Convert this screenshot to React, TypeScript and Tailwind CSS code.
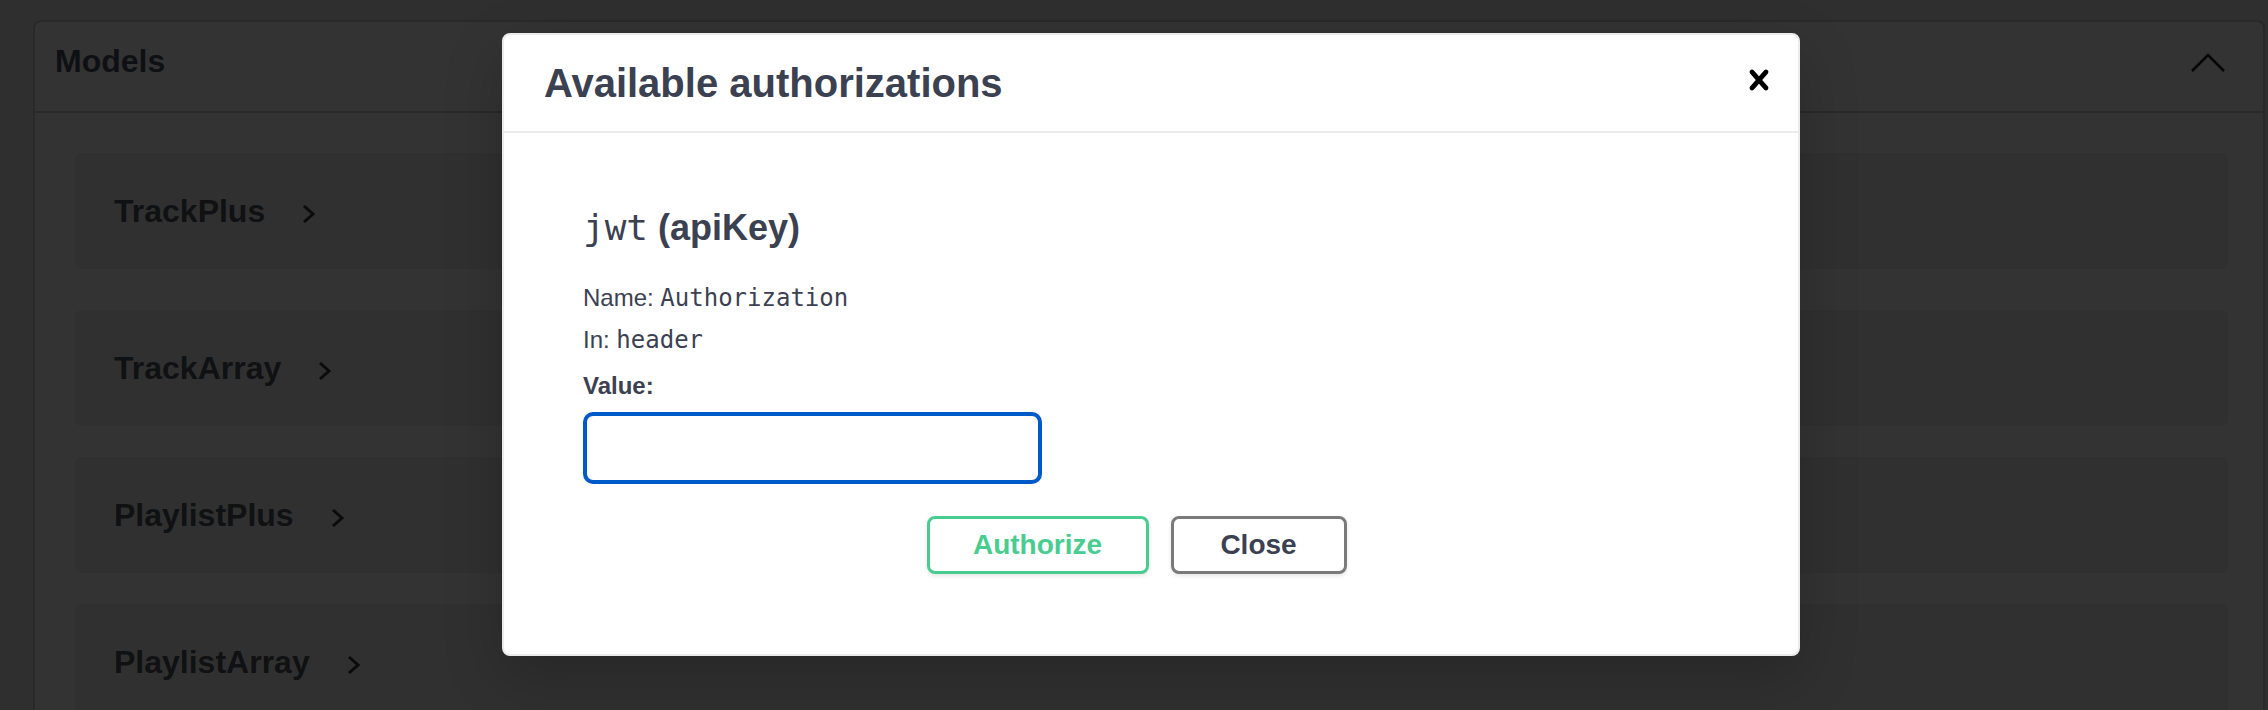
const MODEL_NAMES = ["TrackPlus", "TrackArray", "PlaylistPlus", "PlaylistArray"];

function ChevronRight() {
  return (
    <svg
      width="16"
      height="22"
      viewBox="0 0 16 22"
      fill="none"
      stroke="#0b0b0b"
      strokeWidth="3"
      className="ml-[36px] mt-[6px] shrink-0"
    >
      <polyline points="3,3 12,11 3,19" />
    </svg>
  );
}

function ChevronUp() {
  return (
    <svg
      width="36"
      height="20"
      viewBox="0 0 36 20"
      fill="none"
      stroke="#050505"
      strokeWidth="2.5"
      className="mt-[10px] shrink-0"
    >
      <polyline points="2,18 18,2 34,18" />
    </svg>
  );
}

function CloseIcon() {
  return (
    <svg width="40" height="40" viewBox="0 0 20 20" className="-mt-[6px] shrink-0">
      <path
        fill="#000"
        d="M14.348 14.849c-.469.469-1.229.469-1.697 0L10 11.819l-2.651 3.029c-.469.469-1.229.469-1.697 0-.469-.469-.469-1.229 0-1.697l2.758-3.15-2.759-3.152c-.469-.469-.469-1.228 0-1.697.469-.469 1.228-.469 1.697 0L10 8.183l2.651-3.031c.469-.469 1.228-.469 1.697 0 .469.469.469 1.229 0 1.697l-2.758 3.152 2.758 3.15c.469.469.469 1.229 0 1.698z"
      />
    </svg>
  );
}

function ModelCard({ name, first }: { name: string; first: boolean }) {
  return (
    <div
      className={`flex h-[116px] shrink-0 items-center rounded-[8px] bg-[#303030] pl-[39px] ${
        first ? "mb-[41px]" : "mb-[31px]"
      }`}
    >
      <span className="text-[32px] font-bold leading-[37px] text-[#101113]">
        {name}
      </span>
      <ChevronRight />
    </div>
  );
}

function AuthModal() {
  return (
    <div className="absolute left-[502px] top-[33px] w-[1298px] rounded-[8px] border-2 border-[#ebebeb] bg-white shadow-[0_20px_60px_rgba(0,0,0,0.2)]">
      <div className="flex items-center justify-between border-b-2 border-[#ebebeb] py-[25px] pl-[40px] pr-[19px]">
        <h3 className="text-[40px] font-bold leading-[46px] text-[#3b4151]">
          Available authorizations
        </h3>
        <CloseIcon />
      </div>

      <div className="flex flex-col pb-[80px] pl-[79px] pr-[80px] pt-[74px] text-[#3b4151]">
        <h4 className="text-[36px] font-bold leading-[42px]">
          <code className="font-['DejaVu_Sans_Mono',monospace] font-normal">
            jwt
          </code>{" "}
          (apiKey)
        </h4>
        <p className="mb-[10px] mt-[33px] text-[24px] leading-[32px]">
          Name:{" "}
          <code className="font-['DejaVu_Sans_Mono',monospace]">
            Authorization
          </code>
        </p>
        <p className="mb-[10px] text-[24px] leading-[32px]">
          In:{" "}
          <code className="font-['DejaVu_Sans_Mono',monospace]">header</code>
        </p>
        <label className="mt-[4px] text-[24px] font-bold leading-[32px]">
          Value:
        </label>
        <input
          type="text"
          className="mt-[10px] h-[72px] w-[459px] rounded-[10px] border-[4px] border-[#0059c9] bg-white px-[16px] text-[24px] outline-none"
        />

        <div className="mt-[32px] flex justify-center">
          <button className="flex h-[58px] w-[222px] items-center justify-center rounded-[8px] border-[3px] border-[#49cc90] bg-white text-[28px] font-bold text-[#49cc90] shadow-[0_2px_4px_rgba(0,0,0,0.1)]">
            Authorize
          </button>
          <button className="ml-[22px] mr-[28px] flex h-[58px] w-[176px] items-center justify-center rounded-[8px] border-[3px] border-[#7a7a7a] bg-white text-[28px] font-bold text-[#3b4151] shadow-[0_2px_4px_rgba(0,0,0,0.1)]">
            Close
          </button>
        </div>
      </div>
    </div>
  );
}

export default function App() {
  return (
    <div className="relative h-[710px] w-[2268px] overflow-hidden bg-[#2f2f2f] font-['Liberation_Sans',Arial,sans-serif]">
      <div className="pl-[33px] pr-[3px] pt-[20px]">
        <section className="rounded-[8px] border-2 border-[#28292b] bg-[#333333]">
          <div className="flex h-[91px] items-start justify-between border-b-2 border-[#28292b] pl-[20px] pr-[37px] pt-[21px]">
            <h4 className="text-[32px] font-bold leading-[37px] text-[#0f1013]">
              Models
            </h4>
            <ChevronUp />
          </div>
          <div className="flex flex-col pl-[40px] pr-[35px] pt-[40px]">
            {MODEL_NAMES.map((name, index) => (
              <ModelCard key={name} name={name} first={index === 0} />
            ))}
          </div>
        </section>
      </div>

      <AuthModal />
    </div>
  );
}
